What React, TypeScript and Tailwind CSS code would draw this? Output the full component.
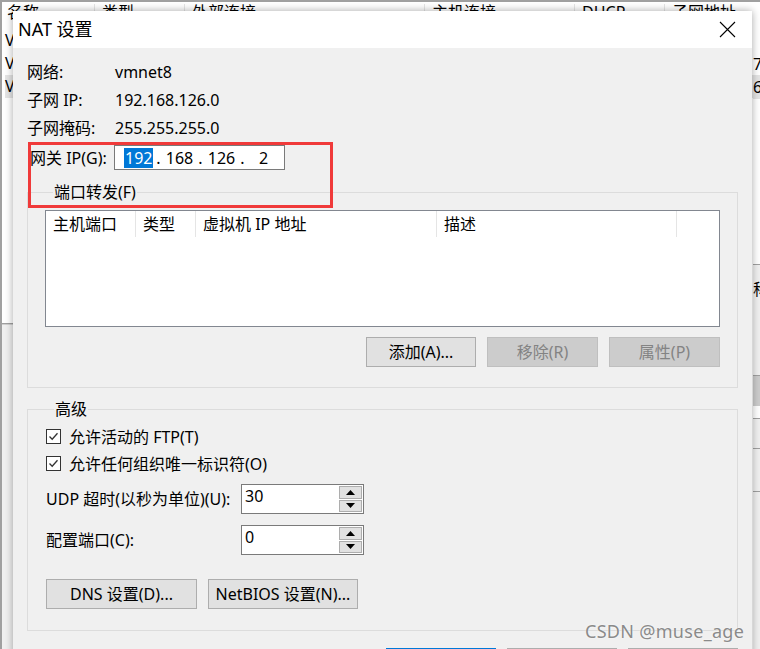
import React from "react";

const font = "font-['Noto_Sans','Noto_Sans_CJK_SC',sans-serif]";

function Button({ label, disabled, w }: { label: string; disabled?: boolean; w: string }) {
  return (
    <div
      className={`${w} h-[30px] flex items-center justify-center border text-[16px] ${
        disabled
          ? "bg-[#cccccc] border-[#bfbfbf] text-[#838383]"
          : "bg-[#e1e1e1] border-[#adadad] text-black"
      }`}
    >
      {label}
    </div>
  );
}

function CheckRow({ label }: { label: string }) {
  return (
    <div className="flex items-center h-[27px]">
      <div className="w-[15px] h-[15px] border border-[#333] bg-white flex items-center justify-center">
        <svg width="11" height="11" viewBox="0 0 11 11">
          <path d="M1.5 5.5 L4.2 8.3 L9.5 2.2" stroke="#333" strokeWidth="1.3" fill="none" />
        </svg>
      </div>
      <span className="ml-[8px]">{label}</span>
    </div>
  );
}

function Spinner({ value }: { value: string }) {
  return (
    <div className="w-[123px] h-[30px] border border-[#7a7a7a] bg-white flex">
      <div className="flex-1 pl-[3px] leading-[22px]">{value}</div>
      <div className="w-[24px] flex flex-col gap-[1px] pr-[1px] py-[1px]">
        <div className="flex-1 bg-[#e1e1e1] border border-[#adadad] flex items-center justify-center">
          <svg width="9" height="5" viewBox="0 0 9 5">
            <path d="M0 5 L4.5 0 L9 5 Z" fill="#000" />
          </svg>
        </div>
        <div className="flex-1 bg-[#e1e1e1] border border-[#adadad] flex items-center justify-center">
          <svg width="9" height="5" viewBox="0 0 9 5">
            <path d="M0 0 L4.5 5 L9 0 Z" fill="#000" />
          </svg>
        </div>
      </div>
    </div>
  );
}

function Background() {
  const cols = [
    { x: 5, t: "名称" },
    { x: 100, t: "类型" },
    { x: 190, t: "外部连接" },
    { x: 430, t: "主机连接" },
    { x: 580, t: "DHCP" },
    { x: 670, t: "子网地址" },
  ];
  return (
    <div className="absolute inset-0 bg-white border-t-2 border-l-2 border-[#a0a0a0]">
      <div className="relative h-[28px] -mt-[4px] text-[16px]">
        {cols.map((c) => (
          <span key={c.t} className="absolute top-[2px]" style={{ left: c.x }}>
            {c.t}
          </span>
        ))}
        {[92, 182, 422, 572, 662].map((x) => (
          <div key={x} className="absolute top-[6px] w-px h-[16px] bg-[#e5e5e5]" style={{ left: x }} />
        ))}
      </div>
      <div className="text-[16px] leading-[23px] pl-[3px] mt-[3px]">
        <div>VMnet0</div>
        <div>VMnet1</div>
        <div className="bg-[#e5e5e5]">VMnet8</div>
      </div>
      <div className="absolute left-[751px] top-[51px] text-[16px] leading-[23px]">
        <div>7</div>
        <div className="bg-[#e5e5e5]">6</div>
      </div>
      <div className="absolute left-[751px] top-[262px] w-[9px] h-[112px] border-t border-b border-[#a0a0a0] bg-[#f0f0f0]">
        <div className="text-[16px] mt-[12px]">称</div>
      </div>
      <div className="absolute left-[751px] top-[374px] w-[9px] h-[30px] bg-[#cccccc]" />
      <div className="absolute left-[751px] top-[416px] w-[9px] h-[240px] border-t border-[#a0a0a0] bg-[#f0f0f0]">
        <div className="h-[30px] border-b border-[#a0a0a0]" />
        <div className="h-[43px] border-b border-[#a0a0a0]" />
      </div>
      <div className="absolute left-0 top-[262px] w-[13px] h-[60px] border-b border-[#a0a0a0]" />
      <div className="absolute left-0 top-[322px] w-[13px] h-[330px] border-t border-[#d0d0d0] bg-[#f0f0f0]" />
    </div>
  );
}

export default function App() {
  return (
    <div className={`relative w-[760px] h-[649px] overflow-hidden ${font} text-black`}>
      <Background />

      <div className="absolute left-[13px] top-[11px] w-[739px] h-[680px] bg-[#f0f0f0] shadow-[0_0_8px_rgba(0,0,0,0.35)] text-[16px]">
        {/* title bar */}
        <div className="h-[37px] bg-white flex items-center justify-between pl-[5px] pr-[16px]">
          <span className="text-[18px]">NAT 设置</span>
          <svg width="17" height="17" viewBox="0 0 17 17">
            <path d="M1 1 L16 16 M16 1 L1 16" stroke="#000" strokeWidth="1.1" />
          </svg>
        </div>

        <div className="pt-[10px] pl-[14px]">
          {[
            ["网络:", "vmnet8"],
            ["子网 IP:", "192.168.126.0"],
            ["子网掩码:", "255.255.255.0"],
          ].map(([k, v]) => (
            <div key={k} className="flex items-center h-[28px]">
              <span className="w-[88px]">{k}</span>
              <span>{v}</span>
            </div>
          ))}

          <div className="flex items-center mt-[3px] h-[25px]">
            <span className="w-[87px] pl-[3px]">网关 IP(G):</span>
            <div className="w-[171px] h-[25px] border border-[#7a7a7a] bg-white flex items-center pl-[9px]">
              <span className="bg-[#0078d7] text-white px-[1px] leading-[20px]">192</span>
              <span className="w-[10px] text-center">.</span>
              <span className="w-[32px] text-center">168</span>
              <span className="w-[10px] text-center">.</span>
              <span className="w-[32px] text-center">126</span>
              <span className="w-[10px] text-center">.</span>
              <span className="w-[32px] text-center">2</span>
            </div>
          </div>
        </div>

        {/* port forwarding group */}
        <fieldset className="mx-[14px] mt-[12px] h-[206px] border border-[#dcdcdc] px-[17px] pt-[8px]">
          <legend className="ml-[8px] px-px leading-[20px]">端口转发(F)</legend>
          <div className="h-[117px] border border-[#828790] bg-white flex">
            {[
              ["主机端口", "w-[90px]"],
              ["类型", "w-[60px]"],
              ["虚拟机 IP 地址", "w-[241px]"],
              ["描述", "w-[240px]"],
            ].map(([t, w]) => (
              <div key={t} className={`${w} h-[26px] border-r border-[#e5e5e5] pl-[7px] leading-[26px]`}>
                {t}
              </div>
            ))}
          </div>
          <div className="flex justify-end gap-[11px] mt-[10px]">
            <Button label="添加(A)..." w="w-[110px]" />
            <Button label="移除(R)" w="w-[111px]" disabled />
            <Button label="属性(P)" w="w-[111px]" disabled />
          </div>
        </fieldset>

        {/* advanced group */}
        <fieldset className="mx-[14px] mt-[11px] h-[232px] border border-[#dcdcdc] pl-[18px] pt-[4px]">
          <legend className="ml-[8px] px-px leading-[20px]">高级</legend>
          <CheckRow label="允许活动的 FTP(T)" />
          <CheckRow label="允许任何组织唯一标识符(O)" />
          <div className="flex items-center mt-[7px]">
            <span className="w-[195px]">UDP 超时(以秒为单位)(U):</span>
            <Spinner value="30" />
          </div>
          <div className="flex items-center mt-[11px]">
            <span className="w-[195px]">配置端口(C):</span>
            <Spinner value="0" />
          </div>
          <div className="flex gap-[11px] mt-[24px]">
            <Button label="DNS 设置(D)..." w="w-[151px]" />
            <Button label="NetBIOS 设置(N)..." w="w-[150px]" />
          </div>
        </fieldset>

        <div className="flex justify-end gap-[11px] mr-[14px] mt-[17px]">
          <div className="w-[110px] h-[30px] border-2 border-[#0078d7] bg-[#e1e1e1]" />
          <div className="w-[110px] h-[30px] border border-[#adadad] bg-[#e1e1e1]" />
          <div className="w-[110px] h-[30px] border border-[#adadad] bg-[#e1e1e1]" />
        </div>
      </div>

      {/* annotation */}
      <div className="absolute left-[28px] top-[142px] w-[305px] h-[66px] border-[3px] border-[#f03a3a]" />

      <div className="absolute left-[585px] top-[618px] text-[18px] tracking-[0.3px] text-[#8a8a8a] [text-shadow:0_0_2px_#fff]">
        CSDN @muse_age
      </div>
    </div>
  );
}
